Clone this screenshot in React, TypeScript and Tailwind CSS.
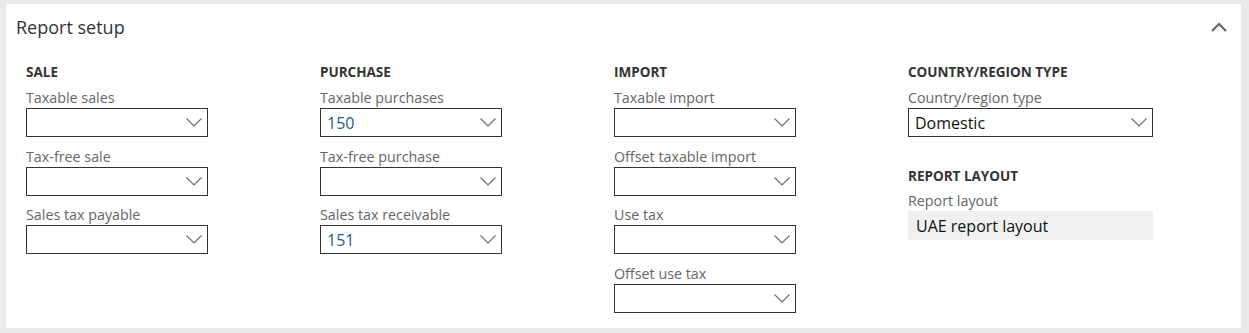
import React from 'react';

type Field = {
  label: string;
  value?: string;
  link?: boolean;
};

const font = { fontFamily: '"Open Sans", "Noto Sans", sans-serif' };

const ChevronDown = () => (
  <svg width="16" height="9" viewBox="0 0 16 9" className="shrink-0">
    <path d="M0.5 0.5 L8 8 L15.5 0.5" fill="none" stroke="#6b6b6b" strokeWidth="1.1" />
  </svg>
);

const ChevronUp = () => (
  <svg width="16" height="10" viewBox="0 0 16 10">
    <path d="M1 9 L8 2 L15 9" fill="none" stroke="#666" strokeWidth="2.2" />
  </svg>
);

const ComboBox: React.FC<{ value?: string; link?: boolean; wide?: boolean }> = ({ value, link, wide }) => (
  <div
    className={`flex h-[29px] items-center justify-between border border-[#333] bg-white pl-[6px] pr-[5px] ${
      wide ? 'w-[245px]' : 'w-[182px]'
    }`}
  >
    <span className={`text-[16px] leading-none ${link ? 'text-[#1f5c92]' : 'text-[#111]'}`}>{value}</span>
    <ChevronDown />
  </div>
);

const FieldRow: React.FC<Field & { wide?: boolean }> = ({ label, value, link, wide }) => (
  <div className="flex flex-col">
    <div className="flex h-[20px] items-center text-[14.3px] text-[#666]">{label}</div>
    <ComboBox value={value} link={link} wide={wide} />
  </div>
);

const Heading: React.FC<{ children: React.ReactNode }> = ({ children }) => (
  <div className="flex h-[18px] items-end text-[13.5px] font-bold uppercase leading-[16px] text-[#333]">
    {children}
  </div>
);

const Group: React.FC<{ title: string; fields: Field[] }> = ({ title, fields }) => (
  <div className="flex w-[294px] flex-col">
    <Heading>{title}</Heading>
    <div className="mt-[8px] flex flex-col gap-[9.5px]">
      {fields.map((f) => (
        <FieldRow key={f.label} {...f} />
      ))}
    </div>
  </div>
);

const groups: { title: string; fields: Field[] }[] = [
  {
    title: 'Sale',
    fields: [{ label: 'Taxable sales' }, { label: 'Tax-free sale' }, { label: 'Sales tax payable' }],
  },
  {
    title: 'Purchase',
    fields: [
      { label: 'Taxable purchases', value: '150', link: true },
      { label: 'Tax-free purchase' },
      { label: 'Sales tax receivable', value: '151', link: true },
    ],
  },
  {
    title: 'Import',
    fields: [
      { label: 'Taxable import' },
      { label: 'Offset taxable import' },
      { label: 'Use tax' },
      { label: 'Offset use tax' },
    ],
  },
];

export default function App() {
  return (
    <div className="h-[333px] w-full bg-[#eaeaea] pl-[6px] pr-[8px] pt-[4px] pb-[5px]" style={font}>
      <div className="flex h-[324px] flex-col bg-white">
        <div className="flex items-center justify-between pl-[10px] pr-[14px] pt-[9px]">
          <span className="text-[18px] leading-[28px] text-[#333]">Report setup</span>
          <ChevronUp />
        </div>

        <div className="mt-[21px] flex pl-[20px]">
          {groups.map((g) => (
            <Group key={g.title} title={g.title} fields={g.fields} />
          ))}

          <div className="flex flex-col">
            <Heading>Country/region type</Heading>
            <div className="mt-[8px]">
              <FieldRow label="Country/region type" value="Domestic" wide />
            </div>

            <div className="mt-[29px]">
              <Heading>Report layout</Heading>
            </div>
            <div className="mt-[7px] flex flex-col">
              <div className="flex h-[20px] items-center text-[14.3px] text-[#666]">Report layout</div>
              <div className="flex h-[29px] w-[245px] items-center bg-[#f0f0f0] pl-[8px] text-[16px] text-[#111]">
                UAE report layout
              </div>
            </div>
          </div>
        </div>
      </div>
    </div>
  );
}
